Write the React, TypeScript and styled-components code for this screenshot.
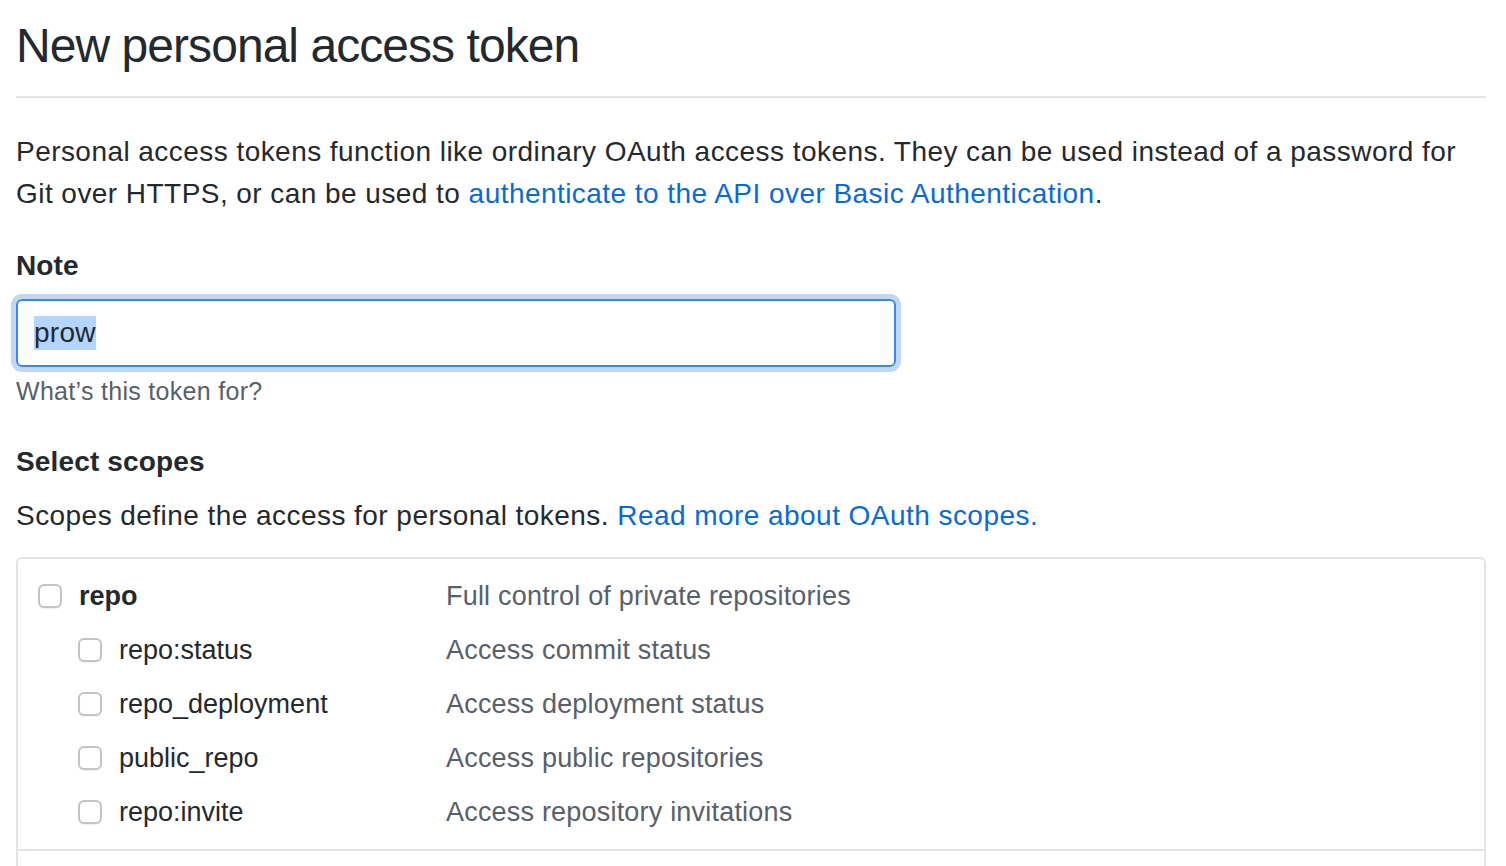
import React from "react";
import styled, { createGlobalStyle } from "styled-components";

const GlobalStyle = createGlobalStyle`
  html, body {
    margin: 0;
    padding: 0;
    background: #fff;
  }
  body {
    font-family: "Liberation Sans", Arial, sans-serif;
    color: #24292e;
    overflow: hidden;
  }
`;

const Page = styled.div`
  padding: 16px 20px 0 16px;
`;

const Heading = styled.h1`
  margin: 0;
  padding-bottom: 20px;
  border-bottom: 2px solid #e1e4e8;
  font-size: 48px;
  font-weight: 400;
  line-height: 60px;
  letter-spacing: -0.95px;
  color: #24292e;
`;

const Lead = styled.p<{ $top: number }>`
  margin: ${(p) => p.$top}px 0 0;
  font-size: 28px;
  line-height: 42px;
  letter-spacing: 0.45px;
`;

const Link = styled.a`
  color: #0969da;
  text-decoration: none;
`;

const FieldLabel = styled.h3<{ $top: number }>`
  margin: ${(p) => p.$top}px 0 0;
  font-size: 28px;
  line-height: 42px;
  font-weight: 700;
  letter-spacing: 0.15px;
`;

const Input = styled.div`
  box-sizing: border-box;
  width: 880px;
  height: 68px;
  margin-top: 12px;
  padding: 0 16px;
  display: flex;
  align-items: center;
  border: 2px solid #3b86f2;
  border-radius: 6px;
  box-shadow: 0 0 0 5px #c3d7f5;
  font-size: 28px;
  letter-spacing: 0.3px;
`;

const Selected = styled.span`
  background: #b4d5fe;
  line-height: 34px;
`;

const Hint = styled.p`
  margin: 6px 0 0;
  font-size: 25px;
  line-height: 36px;
  letter-spacing: 0.3px;
  color: #586069;
`;

const ScopeBox = styled.div`
  margin-top: 20px;
  border: 2px solid #e1e4e8;
  border-radius: 6px;
`;

const ScopeGroup = styled.div`
  padding: 10px 0;
  & + & {
    border-top: 2px solid #e1e4e8;
  }
`;

const Row = styled.label`
  display: grid;
  grid-template-columns: 428px 1fr;
  align-items: center;
  height: 54px;
  font-size: 27px;
`;

const Name = styled.span<{ $child?: boolean; $parent?: boolean }>`
  display: flex;
  align-items: center;
  gap: 17px;
  padding-left: ${(p) => (p.$child ? 60 : 20)}px;
  font-weight: ${(p) => (p.$parent ? 700 : 400)};
  color: #24292e;
`;

const Box = styled.span`
  box-sizing: border-box;
  width: 24px;
  height: 24px;
  border: 2px solid #c4c4c4;
  border-radius: 6px;
  background: #fff;
  box-shadow: 0 1px 1px rgba(0, 0, 0, 0.06);
  flex: none;
`;

const Desc = styled.span`
  color: #586069;
  letter-spacing: 0.2px;
`;

const groups = [
  [
    ["repo", "Full control of private repositories"],
    ["repo:status", "Access commit status"],
    ["repo_deployment", "Access deployment status"],
    ["public_repo", "Access public repositories"],
    ["repo:invite", "Access repository invitations"],
  ],
  [
    ["admin:org", "Full control of orgs and teams, read and write org projects"],
    ["write:org", "Read and write org and team membership, read and write org projects"],
  ],
];

export default function App() {
  return (
    <Page>
      <GlobalStyle />
      <Heading>New personal access token</Heading>
      <Lead $top={33}>
        Personal access tokens function like ordinary OAuth access tokens. They can be used instead of a password for
        Git over HTTPS, or can be used to{" "}
        <Link href="#">authenticate to the API over Basic Authentication</Link>.
      </Lead>
      <FieldLabel $top={30}>Note</FieldLabel>
      <Input>
        <Selected>prow</Selected>
      </Input>
      <Hint>What’s this token for?</Hint>
      <FieldLabel $top={32}>Select scopes</FieldLabel>
      <Lead $top={12}>
        Scopes define the access for personal tokens. <Link href="#">Read more about OAuth scopes.</Link>
      </Lead>
      <ScopeBox>
        {groups.map((g, gi) => (
          <ScopeGroup key={gi}>
            {g.map(([name, desc], i) => (
              <Row key={name}>
                <Name $child={i > 0} $parent={i === 0}>
                  <Box />
                  {name}
                </Name>
                <Desc>{desc}</Desc>
              </Row>
            ))}
          </ScopeGroup>
        ))}
      </ScopeBox>
    </Page>
  );
}
